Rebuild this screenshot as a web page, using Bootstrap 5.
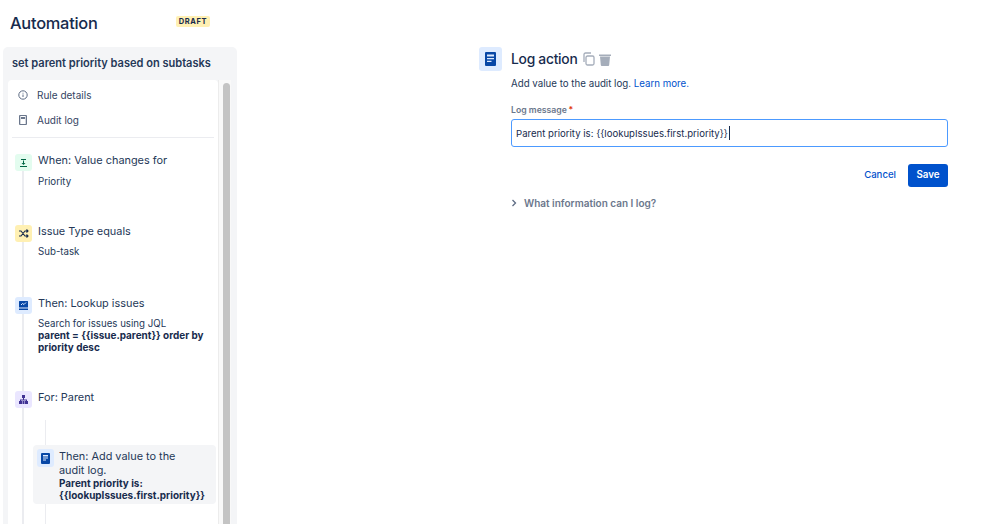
<!DOCTYPE html>
<html lang="en"><head><meta charset="utf-8"><title>Automation</title>
<link href="https://cdn.jsdelivr.net/npm/bootstrap@5.3.0/dist/css/bootstrap.min.css" rel="stylesheet">
<style>
html,body{height:524px;overflow:hidden}
body{font-family:Inter,"Liberation Sans",sans-serif;color:#172b4d;background:#fff;font-size:10.5px;line-height:12px}
.page-wrap{width:999px;height:524px;overflow:hidden}
.left-col{width:234px;margin-left:3px;flex:none}
.head-row{height:47px;padding-left:7px;padding-right:27px}
.head-title{font-size:16.4px;line-height:20px;font-weight:500;margin:-2px 0 0;letter-spacing:-.25px;color:#172b4d}
.draft-tag{background:#fff0b3;color:#172b4d;font-size:7.5px;font-weight:700;letter-spacing:.6px;line-height:11px;padding:0 3px;border-radius:2px;margin-top:-5px}
.rule-panel{background:#f4f5f7;border-radius:5px 5px 0 0;height:477px;padding:0 6px 0 5px}
.rule-name{font-size:11.05px;font-weight:600;line-height:33px;height:33px;padding-left:4px;color:#253858}
.rule-body{height:444px}
.rule-list{width:210px;background:#fff;border-radius:4px 4px 0 0;flex:none;padding:0 4px;overflow:hidden;position:relative}
.scroll-track{width:13px;flex:none;background:#f9f9f9;padding:3px 3px 0 4px;border-left:1px solid #ececec}
.scroll-thumb{background:#c4c4c4;height:100%;border-radius:4px 4px 0 0;width:7px}
.meta-link{height:25px;padding-left:6px;gap:9px;font-size:10px;color:#344563}
.meta-first{margin-top:2px}
.meta-rule{border-top:1px solid #ebecf0;height:0;margin-top:5px}
.step-line{position:absolute;left:14px;top:84px;bottom:0;width:2px;background:#ebecf0}
.sub-line{position:absolute;left:37px;top:340px;bottom:0;width:1px;background:#ebecf0}
.flow-step{position:relative;gap:6px;padding-left:3px}
.step-icon{width:17px;height:17px;flex:none;border-radius:3px;margin-top:1px}
.ic-green{background:#e3fcef;color:#006644}
.ic-yellow{background:#fff0b3;color:#172b4d}
.ic-blue{background:#deebff;color:#0747a6}
.ic-purple{background:#eae6ff;color:#403294}
.step-title{font-size:10.9px;line-height:15px;color:#253858}
.step-sub{font-size:9.7px;line-height:12px;color:#253858}
.step-sub-gap{margin-top:7px}
.step-sub-first{margin-top:8px}
.step-one{margin-top:15px;height:71px}
.step-two{height:72px}
.step-three{height:94px}
.step-four{height:55px}
.active-step{background:#f4f5f7;border-radius:4px;margin-left:21px;height:59px;padding:4px 0 0 4px;gap:5px;position:relative;width:183px}
.active-step .step-title{line-height:14px}
.active-step .step-icon{margin-top:0;height:18px}
.bold-line{font-weight:700;color:#172b4d;font-size:9.95px;line-height:12px;display:block}
.q-width{width:172px}
.q-width .bold-line{margin-top:-1px}
.main-col{padding-top:47px;padding-left:242px}
.form-wrap{width:469px;gap:9px}
.big-icon{width:23px;height:24px;background:#deebff;color:#0747a6;border-radius:3px;flex:none}
.form-col{width:437px}
.form-head{gap:5px}
.form-title{font-size:13.8px;line-height:24px;font-weight:500;margin:0;color:#172b4d;letter-spacing:-.25px}
.tool-icons{gap:4px}
.form-intro{font-size:9.73px;line-height:12px;margin:7px 0 0;color:#253858}
.learn-more{color:#0052cc;text-decoration:none}
.field-label{font-size:8.7px;font-weight:600;color:#6b778c;line-height:11px;margin:15px 0 3px;display:block}
.req-star{color:#de350b;margin-left:1.500px}
.log-wrap{position:relative}
.log-input{height:28px;border:1.5px solid #4c9aff;border-radius:3px;font-size:9.6px;color:#172b4d;padding:0 4px;box-shadow:none;background:#fff;font-family:inherit;line-height:24px}
.log-input:focus{border-color:#4c9aff;box-shadow:none}
.fake-caret{position:absolute;left:218px;top:7px;width:1px;height:14px;background:#172b4d}
.form-actions{margin-top:17px;gap:12px}
.cancel-link{color:#0052cc;font-weight:500;font-size:9.6px;padding:0;border:0;background:none}
.save-btn{background:#0052cc;border:0;color:#fff;font-weight:600;font-size:9.8px;width:40px;height:23px;padding:0;border-radius:3px}
.what-info{margin-top:10px;font-size:10px;font-weight:600;color:#6b778c;gap:7px;line-height:12px}
</style></head>
<body>
<div class="page-wrap d-flex">
  <div class="left-col d-flex flex-column">
    <div class="head-row d-flex justify-content-between align-items-center">
      <h1 class="head-title">Automation</h1><span class="draft-tag">DRAFT</span>
    </div>
    <div class="rule-panel">
      <div class="rule-name">set parent priority based on subtasks</div>
      <div class="rule-body d-flex">
        <div class="rule-list">
          <div class="step-line"></div><div class="sub-line"></div>
          <div class="meta-link meta-first d-flex align-items-center">
            <svg width="10" height="10" viewBox="0 0 10 10" fill="none" stroke="#5e6c84"><circle cx="5" cy="5" r="4.2"/><path d="M5 4.500v2.500M5 2.800v.8"/></svg><span>Rule details</span>
          </div>
          <div class="meta-link d-flex align-items-center">
            <svg width="10" height="12" viewBox="0 0 10 12"><path fill="#6b778c" d="M2 1h6a1 1 0 0 1 1 1v8a1 1 0 0 1-1 1H2a1 1 0 0 1-1-1V2a1 1 0 0 1 1-1zm.3 1v8h5.400V2zM3 3h4v2H3z"/></svg><span>Audit log</span>
          </div>
          <div class="meta-rule"></div>
          <div class="flow-step step-one d-flex">
            <div class="step-icon ic-green d-flex align-items-center justify-content-center"><svg width="11" height="11" viewBox="0 0 11 11"><path fill="currentColor" d="M3 2h5v1H3zM2 9h7v1H2zM5 3.500h1v2.500h1.500L5.500 8 3.500 6H5z"/></svg></div>
            <div><div class="step-title">When: Value changes for</div><div class="step-sub step-sub-first">Priority</div></div>
          </div>
          <div class="flow-step step-two d-flex">
            <div class="step-icon ic-yellow d-flex align-items-center justify-content-center"><svg width="11" height="11" viewBox="0 0 11 11" fill="none" stroke="currentColor" stroke-width="1.100"><path d="M1 3h2l4 5h2.500M1 8h2l4-5h2.500M8.500 1.500 10 3 8.500 4.500M8.500 6.500 10 8 8.500 9.500"/></svg></div>
            <div><div class="step-title">Issue Type equals</div><div class="step-sub step-sub-gap">Sub-task</div></div>
          </div>
          <div class="flow-step step-three d-flex">
            <div class="step-icon ic-blue d-flex align-items-center justify-content-center"><svg width="11" height="11" viewBox="0 0 11 11"><path fill="currentColor" d="M1.500 1h8a.5.5 0 0 1 .5.5V7a.5.5 0 0 1-.5.5h-8A.5.5 0 0 1 1 7V1.500A.5.5 0 0 1 1.500 1zM1 8.500h9V10H1z"/><path fill="none" stroke="#deebff" d="M3 5l1.500-1.500L6 4.500 8 2.500"/></svg></div>
            <div class="q-width"><div class="step-title">Then: Lookup issues</div><div class="step-sub step-sub-gap">Search for issues using JQL<span class="bold-line">parent = {{issue.parent}} order by priority desc</span></div></div>
          </div>
          <div class="flow-step step-four d-flex">
            <div class="step-icon ic-purple d-flex align-items-center justify-content-center"><svg width="11" height="11" viewBox="0 0 11 11"><path fill="currentColor" d="M4 1h3v3H6v1.500h3V7h1v3H7V7h1V6.500H3V7h1v3H1V7h1V5.500h3V4H4zM4.500 7h2v3h-2z"/></svg></div>
            <div class="step-title">For: Parent</div>
          </div>
          <div class="active-step d-flex">
            <div class="step-icon ic-blue d-flex align-items-center justify-content-center"><svg width="9" height="11" viewBox="0 0 9 11"><path fill="currentColor" d="M1 0h7a1 1 0 0 1 1 1v9a1 1 0 0 1-1 1H1a1 1 0 0 1-1-1V1a1 1 0 0 1 1-1zm1 2v1.500h5V2zm0 2.500v1h5v-1zm0 2v1h3v-1z"/></svg></div>
            <div><div class="step-title">Then: Add value to the<br>audit log.</div><div class="step-sub bold-line">Parent priority is:<br>{{lookupIssues.first.priority}}</div></div>
          </div>
        </div>
        <div class="scroll-track"><div class="scroll-thumb"></div></div>
      </div>
    </div>
  </div>
  <div class="main-col">
    <div class="form-wrap d-flex">
      <div class="big-icon d-flex align-items-center justify-content-center"><svg width="11" height="14" viewBox="0 0 11 14"><path fill="currentColor" d="M1 0h9a1 1 0 0 1 1 1v12a1 1 0 0 1-1 1H1a1 1 0 0 1-1-1V1a1 1 0 0 1 1-1zm1 2.500v2h7v-2zm0 3.500v1.200h7V6zm0 2.800V10h4.500V8.800z"/></svg></div>
      <div class="form-col">
        <div class="form-head d-flex align-items-center">
          <h2 class="form-title">Log action</h2>
          <div class="tool-icons d-flex align-items-center">
            <svg width="13" height="14" viewBox="0 0 13 14" fill="none" stroke="#a5adba" stroke-width="1.300"><rect x="4" y="4" width="8" height="9" rx="1.500"/><path d="M2 10V2.500A1.500 1.500 0 0 1 3.500 1H9"/></svg>
            <svg width="12" height="13" viewBox="0 0 12 13"><path fill="#a5adba" d="M0 1.500h12V3H0zM1 3.500h10l-.8 8.500a1 1 0 0 1-1 1H2.800a1 1 0 0 1-1-1z"/></svg>
          </div>
        </div>
        <p class="form-intro">Add value to the audit log. <a class="learn-more" href="#">Learn more.</a></p>
        <label class="field-label" for="logmsg">Log message<span class="req-star">*</span></label>
        <div class="log-wrap">
          <input id="logmsg" class="form-control log-input" value="Parent priority is: {{lookupIssues.first.priority}}">
          <span class="fake-caret"></span>
        </div>
        <div class="form-actions d-flex justify-content-end align-items-center">
          <button class="btn cancel-link">Cancel</button><button class="btn save-btn">Save</button>
        </div>
        <div class="what-info d-flex align-items-center">
          <svg width="6" height="8" viewBox="0 0 6 8" fill="none" stroke="#5e6c84" stroke-width="1.300"><path d="M1.500 1 4.500 4 1.500 7"/></svg><span>What information can I log?</span>
        </div>
      </div>
    </div>
  </div>
</div>
</body></html>
